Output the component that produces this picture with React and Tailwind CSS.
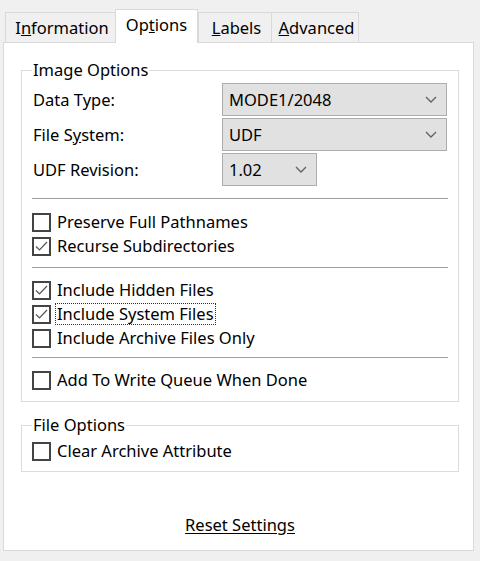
import React from "react";

function Chevron() {
  return (
    <svg width="12" height="7" viewBox="0 0 12 7" className="shrink-0">
      <polyline points="1,1 6,6 11,1" fill="none" stroke="#606060" strokeWidth="1.3" />
    </svg>
  );
}

function Select({ value, width }) {
  return (
    <div
      className={`${width} h-[33px] flex items-center justify-between pl-[6px] pr-[9px] bg-[#e1e1e1] border border-[#adadad]`}
    >
      <span>{value}</span>
      <Chevron />
    </div>
  );
}

function Checkbox({ checked, focused, children }) {
  return (
    <div className="h-[24px] flex items-center -ml-px">
      <div className="w-[19px] h-[19px] border-2 border-[#444] bg-white shrink-0 flex items-center justify-center">
        {checked && (
          <svg width="15" height="15" viewBox="0 0 15 15">
            <polyline points="2,7.5 5.5,11 13,3" fill="none" stroke="#555" strokeWidth="1.2" />
          </svg>
        )}
      </div>
      <span
        className={
          focused
            ? "ml-[5px] leading-[20px] px-px outline-1 outline-dotted outline-[#333]"
            : "ml-[6px]"
        }
      >
        {children}
      </span>
    </div>
  );
}

function Tab({ children, selected, width, last }) {
  if (selected) {
    return (
      <div
        className={`${width} h-[34px] -mb-px relative z-10 bg-white border border-b-0 border-[#d9d9d9] flex items-center justify-center pb-[4px]`}
      >
        {children}
      </div>
    );
  }
  return (
    <div
      className={`${width} h-[30px] bg-[#f0f0f0] border-t border-l ${last ? "border-r" : ""} border-[#d9d9d9] flex items-center justify-center pl-[3px]`}
    >
      {children}
    </div>
  );
}

export default function App() {
  return (
    <div className="h-[561px] w-[480px] overflow-hidden bg-[#f0f0f0] text-black text-[16.5px] leading-[22px] font-['Noto_Sans',sans-serif]">
      <div className="h-[42px] flex items-end pl-[5px]">
        <Tab width="w-[110px]">
          <span>
            I<u>n</u>formation
          </span>
        </Tab>
        <Tab width="w-[83px]" selected>
          <span>
            Op<u>t</u>ions
          </span>
        </Tab>
        <Tab width="w-[73px]">
          <span>
            <u>L</u>abels
          </span>
        </Tab>
        <Tab width="w-[88px]" last>
          <span>
            <u>A</u>dvanced
          </span>
        </Tab>
      </div>

      <div className="ml-[3px] w-[471px] h-[509px] bg-white border border-[#d9d9d9] flex flex-col pl-[17px] pr-[14px]">
        <fieldset className="mt-[16px] border border-[#dcdcdc] pl-[11px] pr-[10px] pb-[9px]">
          <legend className="px-px -ml-px">Image Options</legend>
          <div className="flex flex-col gap-[2px] pt-[2px]">
            <div className="flex items-center">
              <span className="w-[189px]">Data Type:</span>
              <Select value="MODE1/2048" width="w-[225px]" />
            </div>
            <div className="flex items-center">
              <span className="w-[189px]">
                File S<u>y</u>stem:
              </span>
              <Select value="UDF" width="w-[225px]" />
            </div>
            <div className="flex items-center">
              <span className="w-[189px]">UDF Revision:</span>
              <Select value="1.02" width="w-[95px]" />
            </div>
          </div>

          <div className="mt-[12px] border-t border-[#a0a0a0] -ml-px" />
          <div className="mt-[11px]">
            <Checkbox>Preserve Full Pathnames</Checkbox>
            <Checkbox checked>Recurse Subdirectories</Checkbox>
          </div>

          <div className="mt-[9px] border-t border-[#a0a0a0] -ml-px" />
          <div className="mt-[10px]">
            <Checkbox checked>Include Hidden Files</Checkbox>
            <Checkbox checked focused>
              Include System Files
            </Checkbox>
            <Checkbox>Include Archive Files Only</Checkbox>
          </div>

          <div className="mt-[7px] border-t border-[#a0a0a0] -ml-px" />
          <div className="mt-[10px]">
            <Checkbox>Add To Write Queue When Done</Checkbox>
          </div>
        </fieldset>

        <fieldset className="mt-[12px] border border-[#dcdcdc] px-[11px] pt-[3px] pb-[8px]">
          <legend className="px-px -ml-px">File Options</legend>
          <Checkbox>Clear Archive Attribute</Checkbox>
        </fieldset>

        <div className="mt-[42px] flex justify-center">
          <span className="underline underline-offset-2">Reset Settings</span>
        </div>
      </div>
    </div>
  );
}
